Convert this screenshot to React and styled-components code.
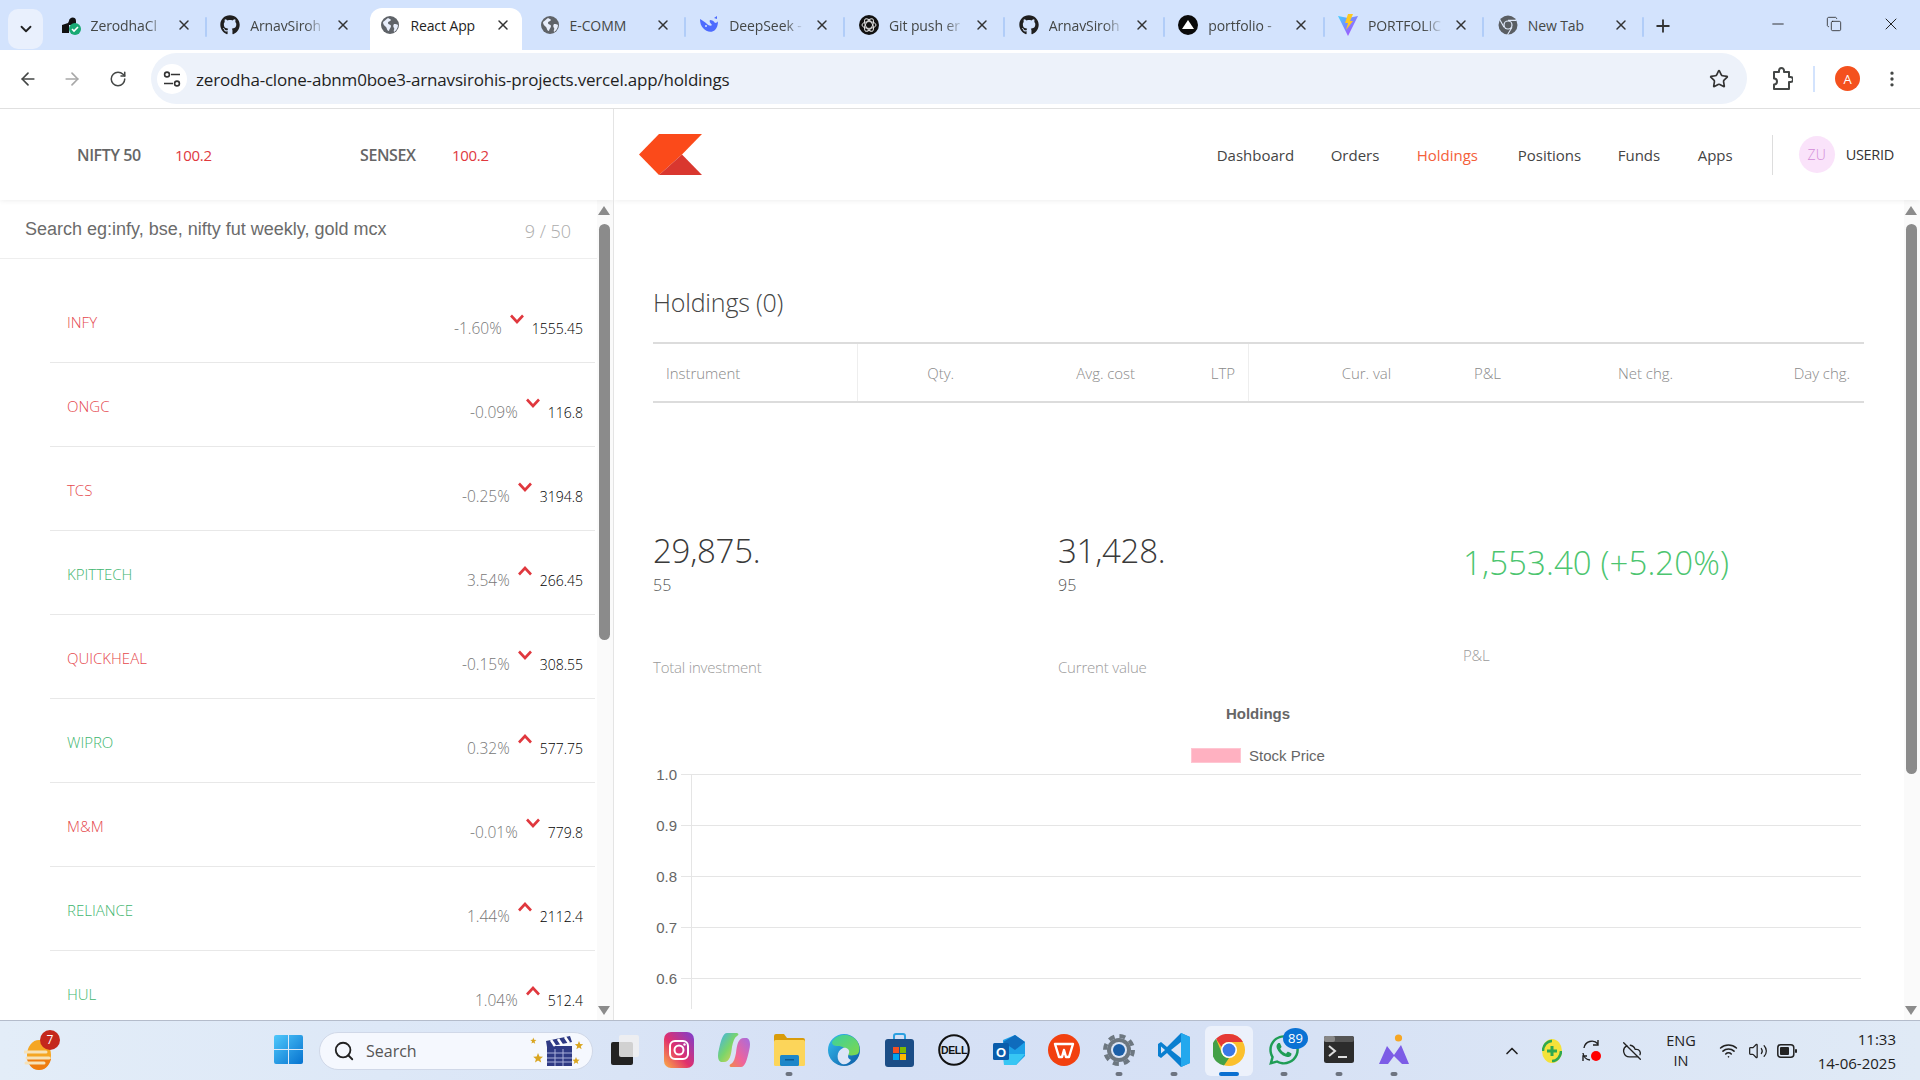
import React from "react";
import styled, { createGlobalStyle } from "styled-components";
import { ArrowLeft, ArrowRight, RotateCw, Star, EllipsisVertical, ChevronDown, X, Plus, Minus, Copy, Search, ChevronUp, Volume2, Wifi, CloudOff } from "lucide-react";
import { FaGithub, FaWhatsapp } from "react-icons/fa";

const UI = `"Open Sans", "Noto Sans", sans-serif`;

const Global = createGlobalStyle`
  html, body { margin: 0; padding: 0; height: 100%; background: #fff; overflow: hidden; }
  * { box-sizing: border-box; }
  body { font-family: ${UI}; }
`;

const Screen = styled.div`
  width: 1920px; height: 1080px; display: flex; flex-direction: column; overflow: hidden; background: #fff;
`;

/* ---------- browser tabs ---------- */
const TabStrip = styled.div`
  height: 50px; flex: none; background: #d3e3fd; display: flex; align-items: flex-end; padding-left: 8px; position: relative;
`;
const TabMenu = styled.button`
  width: 35px; height: 40px; margin: 0 4px 0 0; align-self: flex-start; margin-top: 9px; border: 0; border-radius: 10px;
  background: #e9f0fd; color: #222; display: flex; align-items: center; justify-content: center; padding: 0;
`;
const Tab = styled.div`
  width: ${p => (p.$active ? "151.7px" : "159.7px")}; margin: ${p => (p.$active ? "0 4px" : "0")};
  height: 42px; display: flex; align-items: center; position: relative; flex: none;
  padding: 0 0 8px ${p => (p.$active ? "10px" : "13.5px")};
  background: ${p => (p.$active ? "#fff" : "transparent")};
  border-radius: ${p => (p.$active ? "12px 12px 0 0" : "0")};
  &::after {
    content: ""; position: absolute; right: 0; top: 9px; height: 20px; width: 2px; border-radius: 1px;
    background: ${p => (p.$noDivider ? "transparent" : "#b1cdf8")};
  }
`;
const TabIcon = styled.span`
  width: 20px; height: 20px; flex: none; display: flex; align-items: center; justify-content: center; color: #1f1f1f;
`;
const TabTitle = styled.span`
  width: 77px; margin-left: 10px; font-size: 14px; white-space: nowrap; letter-spacing: -0.1px;
  -webkit-mask-image: ${p => (p.$fade ? "linear-gradient(90deg, #000 72%, transparent 98%)" : "none")};
  color: ${p => (p.$active ? "#1f1f1f" : "#444746")};
`;
const TabClose = styled.span`
  display: flex; color: #333; margin-left: 8px;
`;
const NewTab = styled.span`
  display: flex; color: #333; margin: 0 0 14px 9px;
`;
const WindowControls = styled.div`
  margin-left: auto; display: flex; align-items: center; padding-right: 19px; gap: 39px; color: #222; padding-bottom: 2px;
  align-self: stretch;
`;

/* ---------- address bar ---------- */
const Toolbar = styled.div`
  height: 59px; flex: none; background: #fff; display: flex; align-items: center; border-bottom: 1px solid #e0e0e0; border-radius: 12px 12px 0 0;
  padding: 0 14px 1px 17px; color: #444746;
`;
const NavIcon = styled.span`
  width: 22px; display: flex; justify-content: center; margin-right: ${p => p.$gap || 0}px; color: ${p => (p.$dim ? "#a8a8a8" : "#444746")};
`;
const Omnibox = styled.div`
  width: 1596px; height: 51px; flex: none; border-radius: 26px; background: #edf2fa; display: flex; align-items: center; padding: 0 18px 0 6px; margin-right: 24px;
`;
const SiteChip = styled.span`
  width: 30px; height: 30px; border-radius: 50%; background: #fff; display: flex; align-items: center; justify-content: center; color: #333; flex: none;
`;
const Url = styled.span`
  font-size: 17px; margin-left: 9px; padding-top: 2px; color: #1f1f1f; letter-spacing: -0.19px; flex: 1; white-space: nowrap;
`;
const Divider = styled.span`
  width: 2px; height: 26px; background: #d3e3fd; margin: 0 20px;
`;
const Profile = styled.span`
  width: 25px; height: 25px; border-radius: 50%; background: #f4511e; color: #fff; font-size: 13px; display: flex; align-items: center; justify-content: center; margin-right: 21px;
`;

/* ---------- page ---------- */
const Page = styled.div`
  flex: 1; min-height: 0; display: grid; grid-template-columns: 614px 1fr; overflow: hidden;
`;
const Column = styled.div`
  display: flex; flex-direction: column; min-height: 0; overflow: hidden; border-right: ${p => (p.$left ? "1px solid #e4e4e4" : "0")};
`;
const IndexBar = styled.div`
  height: 91px; flex: none; display: flex; align-items: center; padding: 0 0 0 77px; position: relative; z-index: 2; box-shadow: 0 0 6px rgba(0,0,0,.09); background: #fff;
`;
const IndexName = styled.span`
  font-size: 16px; font-weight: 600; color: #666; width: ${p => p.$w}px; letter-spacing: -0.4px;
`;
const IndexValue = styled.span`
  font-size: 15px; color: #e0393e; width: ${p => p.$w}px; letter-spacing: -0.3px; font-weight: 500;
`;
const PanelBody = styled.div`
  flex: 1; min-height: 0; display: flex; overflow: hidden;
`;
const Watch = styled.div`
  flex: 1; min-width: 0; display: flex; flex-direction: column; overflow: hidden;
`;
const SearchRow = styled.div`
  height: 59px; flex: none; display: flex; align-items: center; justify-content: space-between; border-bottom: 1px solid #eee; padding: 0 26px 0 25px; margin-bottom: 20px;
`;
const SearchText = styled.span`
  font: 18px "Liberation Sans", Arial, sans-serif; color: #6b6b6b;
`;
const Count = styled.span`
  font-size: 18px; color: #ababab; margin-top: 3px; font-weight: 300;
`;
const Row = styled.div`
  height: 84px; flex: none; margin-left: 50px; margin-right: 2px; padding: 3px 12px 0 17px; display: flex; align-items: center; justify-content: space-between; border-bottom: 1px solid #e8e8e8;
`;
const Name = styled.span`
  font-size: 15px; font-weight: 300; color: ${p => (p.$down ? "#e5484d" : "#3fb66f")};
`;
const Quote = styled.span`
  display: flex; align-items: center;
`;
const Pct = styled.span`
  font-size: 15.5px; font-weight: 300; color: #777; margin-top: 12px;
`;
const Arrow = styled.span`
  display: flex; color: #e0383e; margin: 0 7px; transform: translateY(-3px);
`;
const Price = styled.span`
  font-size: 14px; color: #000; font-weight: 300; margin-top: 12px;
`;
const Scrollbar = styled.div`
  width: 16px; flex: none; background: #fafafa; display: flex; flex-direction: column; align-items: center; padding: 6px 2px 5px 0;
`;
const ScrollThumb = styled.div`
  width: 11px; height: ${p => p.$h}px; background: #8b8b8b; border-radius: 6px; margin-top: 9px;
`;
const ScrollSpacer = styled.div` flex: 1; `;
const Caret = styled.div`
  width: 0; height: 0; border-left: 6px solid transparent; border-right: 6px solid transparent;
  ${p => (p.$down ? "border-top: 9px solid #8b8b8b;" : "border-bottom: 9px solid #8b8b8b;")}
`;

const TopMenu = styled.div`
  height: 91px; flex: none; display: flex; align-items: center; padding: 0 0 0 25px; position: relative; z-index: 2; box-shadow: 0 0 6px rgba(0,0,0,.09); background: #fff;
`;
const Menu = styled.nav`
  margin-left: auto; display: flex; align-items: center;
`;
const MenuLink = styled.span`
  font-size: 15px; color: ${p => (p.$active ? "#f4603a" : "#444")}; width: ${p => p.$w}px;
`;
const MenuDivider = styled.span`
  width: 1px; height: 40px; background: #ddd; margin: 0 26px 0 0;
`;
const Avatar = styled.span`
  width: 36px; height: 37px; border-radius: 50%; background: #fae3fa; color: #d28bd8; font-size: 14px; font-weight: 300; display: flex; align-items: center; justify-content: center; flex: none;
`;
const UserId = styled.span`
  font-size: 14.5px; color: #333; margin: 0 26px 0 11px; letter-spacing: -0.3px;
`;
const MainBody = styled.div`
  flex: 1; min-height: 0; display: flex; overflow: hidden;
`;
const Content = styled.div`
  flex: 1; min-width: 0; padding: 84px 40px 0 39px; overflow: hidden;
`;
const Title = styled.h3`
  margin: 0; font-size: 25px; line-height: 36px; font-weight: 300; color: #444; letter-spacing: -0.2px;
`;
const Table = styled.div`
  margin-top: 22px; height: 61px; display: grid; grid-template-columns: 205px 109px 181px 101px 155px 110px 172px 177px; border-top: 2px solid #dcdcdc; border-bottom: 2px solid #dcdcdc;
`;
const Th = styled.div`
  font-size: 15px; font-weight: 300; color: #8a8a8a; display: flex; align-items: center; padding: 1px 13px 0; letter-spacing: -0.05px;
  justify-content: ${p => (p.$left ? "flex-start" : "flex-end")};
  border-right: ${p => (p.$sep ? "1px solid #eee" : "0")};
`;
const Summary = styled.div`
  margin-top: 127px; display: grid; grid-template-columns: repeat(3, 405px);
`;
const Stat = styled.div`
  padding-top: ${p => p.$pt || 0}px;
`;
const Big = styled.div`
  font-size: 33px; line-height: 42px; font-weight: 300; color: ${p => (p.$green ? "#4cc56f" : "#3a3a3a")}; letter-spacing: ${p => (p.$green ? "0.1px" : "-0.25px")}; white-space: nowrap;
`;
const Cents = styled.div`
  font-size: 16px; line-height: 20px; font-weight: 300; color: #555; margin-top: 3px;
`;
const Label = styled.div`
  font-size: 15px; line-height: 20px; font-weight: 300; color: #9a9a9a; margin-top: ${p => p.$mt}px; letter-spacing: -0.2px;
`;
const ChartBox = styled.div`
  margin-top: 29px; width: 1210px;
`;
const ChartTitle = styled.div`
  font: bold 15px/16px "Liberation Sans", Arial, sans-serif; color: #666; text-align: center;
`;
const Legend = styled.div`
  margin-top: 23px; height: 20px; display: flex; align-items: center; justify-content: center; gap: 8px; font: 15px "Liberation Sans", Arial, sans-serif; color: #666;
`;
const LegendSwatch = styled.span`
  width: 50px; height: 15px; background: #ffb1c1; border: 1px solid #ffc6d2;
`;
const ChartSvg = styled.svg`
  display: block; margin-top: 4px; font: 15px "Liberation Sans", Arial, sans-serif;
`;

/* ---------- taskbar ---------- */
const Taskbar = styled.div`
  height: 60px; flex: none; display: flex; align-items: center; border-top: 1px solid #b4bccb; padding: 0 24px;
  background: linear-gradient(90deg, #e3edf8 0%, #dde8f7 20%, #d5e0f5 45%, #d6e1f5 65%, #e0eaf6 100%);
`;
const Widget = styled.div`
  width: 32px; height: 40px; position: relative; display: flex; align-items: flex-end; margin-right: 208px; flex: none;
`;
const WidgetBadge = styled.span`
  position: absolute; left: 16px; top: -1px; width: 20px; height: 20px; border-radius: 50%; background: #c4281c; color: #fff; font-size: 12px; display: flex; align-items: center; justify-content: center;
`;
const TaskItem = styled.div`
  width: 48px; height: 50px; flex: none; display: flex; align-items: center; justify-content: center; position: relative; border-radius: 6px; padding-bottom: 2px;
  background: ${p => (p.$active ? "rgba(255,255,255,.55)" : "transparent")};
  &::after {
    content: ""; display: ${p => (p.$dot || p.$active ? "block" : "none")};
    position: absolute; bottom: 0; left: 50%; transform: translateX(-50%); height: 4px; border-radius: 2px;
    width: ${p => (p.$active ? "20px" : "7px")}; background: ${p => (p.$active ? "#0a6fd0" : "#6d7480")};
  }
`;
const TaskSearch = styled.div`
  width: 274px; height: 38px; flex: none; border-radius: 19px; background: #f5f8fe; border: 1px solid #d0d8e8; display: flex; align-items: center; padding: 0 8px 0 13px; gap: 11px; color: #222;
`;
const TaskSearchText = styled.span`
  font-size: 16px; color: #555; flex: 1;
`;
const TaskGroup = styled.div`
  display: flex; align-items: center; gap: 7px;
`;
const CountBadge = styled.span`
  position: absolute; right: 0; top: 2px; width: 25px; height: 21px; border-radius: 50%; background: #0a72d4; color: #fff; font-size: 13px; display: flex; align-items: center; justify-content: center;
`;
const Tray = styled.div`
  margin-left: auto; display: flex; align-items: center; color: #222;
`;
const TraySlot = styled.span`
  width: ${p => p.$w}px; display: flex; justify-content: center; align-items: center;
`;
const Lang = styled.span`
  font-size: 14.5px; line-height: 20px; color: #222; text-align: center; width: 48px; margin: 0 9px 0 5px;
`;
const Clock = styled.span`
  font-size: 15px; line-height: 24px; color: #222; text-align: right; width: 90px; margin-left: 5px;
`;

/* ---------- drawings ---------- */
const Globe = () => (
  <svg width="20" height="20" viewBox="0 0 20 20"><circle cx="10" cy="10" r="9" fill="#5f6368"/><path d="M3 7c2-1 3-3 5-4 1 1 3 1 3 2-1 2-3 1-3 3s3 1 3 3-2 3-2 5c-2 0-2-3-3-4S3 10 3 7zM14 9c2 0 3 0 4 1 0 3-2 6-4 7-1-2 1-3 0-4s-1-3 0-4z" fill="#e8eefb"/></svg>
);
const ZerodhaFav = () => (
  <svg width="20" height="20" viewBox="0 0 20 20"><path d="M1 10l6-2 1-2c0-4 7-5 7 0v4H8v8H1z" fill="#111"/><circle cx="14" cy="14" r="6" fill="#19a974"/><path d="M11 14l2 2 4-4" stroke="#fff" strokeWidth="1.6" fill="none"/></svg>
);
const WhaleFav = () => (
  <svg width="20" height="20" viewBox="0 0 20 20"><path d="M1 4c0 4 1 7 3 9 3 4 9 5 12 2 2-2 3-5 3-9 0 1-2 2-3 2-1-2-3-3-5-3-1 1 0 3 2 5-1 1-3 1-5-1S3 5 1 4z" fill="#4d6bfe"/><path d="M15 3l3-2v3z" fill="#4d6bfe"/><circle cx="7" cy="11" r="1" fill="#d3e3fd"/></svg>
);
const OpenAiFav = () => (
  <svg width="20" height="20" viewBox="0 0 20 20"><circle cx="10" cy="10" r="10" fill="#111"/>{[0, 60, 120].map(a => <ellipse key={a} cx="10" cy="10" rx="7" ry="3.4" fill="none" stroke="#ddd" strokeWidth="1" transform={`rotate(${a} 10 10)`}/>)}</svg>
);
const VercelFav = () => (
  <svg width="20" height="20" viewBox="0 0 20 20"><circle cx="10" cy="10" r="10" fill="#0a0a0a"/><path d="M10 5l6 9H4z" fill="#fff"/></svg>
);
const ViteFav = () => (
  <svg width="20" height="22" viewBox="0 0 20 22"><defs><linearGradient id="vg" x1="0" y1="0" x2="1" y2="1"><stop offset="0" stopColor="#41d1ff"/><stop offset="1" stopColor="#bd34fe"/></linearGradient></defs><path d="M0 2l10 2 10-2-10 20z" fill="url(#vg)"/><path d="M10 0l5 0-3 7h3l-7 9 2-7H7z" fill="#ffc81f"/></svg>
);
const ChromeMono = () => (
  <svg width="20" height="20" viewBox="0 0 20 20"><circle cx="10" cy="10" r="9.5" fill="#5a5e63"/><circle cx="10" cy="10" r="4.6" fill="#e2ebfb"/><circle cx="10" cy="10" r="3.4" fill="#5a5e63"/><path d="M10 5.4h8.4M6 12.3L2 5M14 12.3l-4.5 7.4" stroke="#e2ebfb" strokeWidth="1.1"/></svg>
);
const Tune = () => (
  <svg width="18" height="18" viewBox="0 0 18 18" fill="none" stroke="#333" strokeWidth="1.6"><circle cx="4" cy="4.500" r="2.400"/><path d="M8 4.500h9M1 13.500h9"/><circle cx="14" cy="13.500" r="2.400"/></svg>
);
const ExtensionIcon = () => (
  <svg width="22" height="24" viewBox="0 0 22 24" fill="none" stroke="#444746" strokeWidth="2" strokeLinejoin="round"><path d="M3 5h5V3.500a2.500 2.500 0 015 0V5h5v5h1.500a2.500 2.500 0 010 5H18v7H3v-4.500c2 0 3-1 3-3s-1-3-3-3z"/></svg>
);
const KiteLogo = () => (
  <svg width="63" height="41" viewBox="0 0 63 41"><path d="M0 20.5L20 0h43L43 20.5 20 41z" fill="#fb4a1a"/><path d="M43 20.5L63 41H20z" fill="#d9372f"/></svg>
);
const Chev = ({ up }) => (
  <svg width="16" height="10" viewBox="0 0 16 10"><path d={up ? "M2 8.5L8 2l6 6.5" : "M2 1.5L8 8l6-6.5"} fill="none" stroke="currentColor" strokeWidth="2.6"/></svg>
);
const Flame = () => (
  <svg width="32" height="36" viewBox="0 0 32 36"><ellipse cx="15" cy="20" rx="12" ry="15" fill="#f5a623"/><path d="M3 24h24c-2 8-7 11-12 11S5 32 3 24z" fill="#ef7d10"/><path d="M0 17h22M3 23h22M2 28h18" stroke="#f6e2b8" strokeWidth="3" strokeLinecap="round"/></svg>
);
const WinLogo = () => (
  <svg width="29" height="29" viewBox="0 0 29 29"><defs><linearGradient id="wl" x1="0" y1="0" x2="1" y2="1"><stop offset="0" stopColor="#4fc8fb"/><stop offset="1" stopColor="#0672cf"/></linearGradient></defs><path d="M0 2a2 2 0 012-2h12v14H0zM15 0h12a2 2 0 012 2v12H15zM0 15h14v14H2a2 2 0 01-2-2zM15 15h14v12a2 2 0 01-2 2H15z" fill="url(#wl)"/></svg>
);
const Clapper = () => (
  <svg width="54" height="32" viewBox="0 0 54 32"><g fill="#d9a520"><path d="M3 6l1.200 3 3 .2-2.400 2 .8 3-2.600-1.700L.6 14l.8-3L-1 9.200l3-.2z" transform="translate(1 -2) scale(.75)"/><path d="M8 18l1.500 3.500 3.500.2-2.700 2.300.9 3.500-3.200-2-3 2 .9-3.500-2.700-2.300 3.500-.2z"/><path d="M50 8l1.200 3 3 .2-2.400 2 .8 3-2.600-1.700-2.600 1.700.8-3-2.400-2 3-.2z" transform="translate(-1 -2)"/><path d="M46 22l1 2.500 2.600.2-2 1.700.7 2.600-2.300-1.400-2.200 1.400.6-2.600-2-1.700 2.600-.2z"/></g><path d="M17 11h25v20H17z" fill="#2f3a84"/><path d="M17 18h25M17 23h25M17 27h25M25 14v17M33 14v17" stroke="#aab0da" strokeWidth="1"/><path d="M16 6l24-5 2 6-25 5z" fill="#2f3a84"/><path d="M21 5l4 6M28 4l4 6M35 2l4 6" stroke="#fff" strokeWidth="2.600"/></svg>
);
const FilesIcon = () => (
  <svg width="30" height="30" viewBox="0 0 30 30"><rect x="2" y="7" width="22" height="23" rx="2" fill="#222"/><rect x="10" y="0" width="20" height="22" rx="2" fill="#f0f0f0" opacity=".85"/></svg>
);
const InstaIcon = () => (
  <svg width="30" height="36" viewBox="0 0 30 36"><defs><linearGradient id="ig" x1="0" y1="1" x2="1" y2="0"><stop offset="0" stopColor="#fcb045"/><stop offset=".45" stopColor="#e1306c"/><stop offset="1" stopColor="#7b3fd1"/></linearGradient></defs><rect width="30" height="36" rx="7" fill="url(#ig)"/><rect x="6" y="9" width="18" height="18" rx="5" fill="none" stroke="#fff" strokeWidth="2"/><circle cx="15" cy="18" r="4.500" fill="none" stroke="#fff" strokeWidth="2"/><circle cx="20.500" cy="12.500" r="1.200" fill="#fff"/></svg>
);
const CopilotIcon = () => (
  <svg width="32" height="36" viewBox="0 0 32 36"><defs><linearGradient id="c1" x1="0" y1="0" x2="1" y2="1"><stop offset="0" stopColor="#3fb0f0"/><stop offset=".5" stopColor="#7ad56b"/><stop offset="1" stopColor="#f6d04d"/></linearGradient><linearGradient id="c2" x1="1" y1="0" x2="0" y2="1"><stop offset="0" stopColor="#a56ce0"/><stop offset=".6" stopColor="#f0649a"/><stop offset="1" stopColor="#f08a4b"/></linearGradient></defs><path d="M9 1h9c3 0 3 2 1 3-3 2-4 6-5 11-1 8-2 15-8 15H4C0 30-1 24 1 17 3 8 5 1 9 1z" fill="url(#c1)"/><path d="M23 35h-9c-3 0-3-2-1-3 3-2 4-6 5-11 1-8 2-15 8-15h2c4 0 5 6 3 13-2 9-4 16-8 16z" fill="url(#c2)"/></svg>
);
const FolderIcon = () => (
  <svg width="31" height="33" viewBox="0 0 31 33"><path d="M0 3a2 2 0 012-2h8l3 4h16a2 2 0 012 2v3H0z" fill="#d99c0a"/><rect y="7" width="31" height="26" rx="1.500" fill="#fcd55a"/><rect x="6" y="22" width="19" height="11" rx="1.500" fill="#1d87c9"/><rect x="11" y="26" width="9" height="1.500" fill="#0b5b94"/></svg>
);
const EdgeIcon = () => (
  <svg width="32" height="32" viewBox="0 0 32 32"><defs><linearGradient id="e1" x1="0" y1="0" x2="1" y2="1"><stop offset="0" stopColor="#35c1f1"/><stop offset="1" stopColor="#0c59a4"/></linearGradient><linearGradient id="e2" x1="0" y1="0" x2="1" y2="1"><stop offset="0" stopColor="#3bd0a0"/><stop offset="1" stopColor="#7fd84a"/></linearGradient></defs><circle cx="16" cy="16" r="16" fill="url(#e1)"/><path d="M4 8C8 0 22-2 29 7c4 6 3 14-2 14-5 1-9 0-9-3 0-4-4-6-8-6S4 11 4 8z" fill="url(#e2)"/><path d="M14 30c-6-3-6-13 1-16 4-1 7 2 6 5-1 3-2 5 2 7-2 3-5 5-9 4z" fill="#dce5f7"/></svg>
);
const StoreIcon = () => (
  <svg width="29" height="34" viewBox="0 0 29 34"><path d="M9 7V3a2 2 0 012-2h7a2 2 0 012 2v4" fill="none" stroke="#2ca0e0" strokeWidth="2"/><rect y="6" width="29" height="28" rx="3" fill="#1b4d86"/><rect x="8" y="14" width="6" height="6" fill="#f25022"/><rect x="15" y="14" width="6" height="6" fill="#7fba00"/><rect x="8" y="21" width="6" height="6" fill="#00a4ef"/><rect x="15" y="21" width="6" height="6" fill="#ffb900"/></svg>
);
const DellIcon = () => (
  <svg width="32" height="32" viewBox="0 0 32 32"><circle cx="16" cy="16" r="14.800" fill="none" stroke="#111" strokeWidth="2"/><text x="16" y="20" textAnchor="middle" fontFamily="Liberation Sans, Arial, sans-serif" fontWeight="700" fontSize="10.500" letterSpacing="-.4" fill="#111">DELL</text></svg>
);
const OutlookIcon = () => (
  <svg width="32" height="32" viewBox="0 0 32 32"><path d="M10 6L22 1l10 7v14l-9 9H11z" fill="#1da1e8"/><path d="M22 1l10 7-10 8-12-8z" fill="#0f6cbd"/><path d="M10 20h22l-9 11H11z" fill="#37c6f4"/><rect y="9" width="16" height="17" rx="1.500" fill="#0a5cab"/><text x="8" y="22.500" textAnchor="middle" fontFamily="Liberation Sans, Arial, sans-serif" fontWeight="700" fontSize="13" fill="#fff">O</text></svg>
);
const WpsIcon = () => (
  <svg width="32" height="32" viewBox="0 0 32 32"><circle cx="16" cy="16" r="16" fill="#f2400f"/><path d="M7 10h18l-4 13h-3l-2-7-2 7h-3z" fill="none" stroke="#fff" strokeWidth="2.400" strokeLinejoin="round"/></svg>
);
const GearIcon = () => (
  <svg width="32" height="32" viewBox="0 0 32 32"><circle cx="16" cy="16" r="12" fill="#6d7780"/><circle cx="16" cy="16" r="14" fill="none" stroke="#6d7780" strokeWidth="4" strokeDasharray="6 5"/><circle cx="16" cy="16" r="8" fill="#dbe5f6"/><circle cx="16" cy="16" r="6" fill="#1b5fa8"/></svg>
);
const VsIcon = () => (
  <svg width="32" height="34" viewBox="0 0 32 34"><path d="M23 0l9 4v26l-9 4L9 20l-6 5-3-2V11l3-2 6 5z" fill="#0a7fd0"/><path d="M23 0l9 4v26l-9 4z" fill="#23a8ee"/><path d="M23 9L13 17l10 8z" fill="#dbe5f6"/><path d="M3 13.500v7l4-3.500z" fill="#dbe5f6"/></svg>
);
const ChromeIcon = () => (
  <svg width="32" height="32" viewBox="0 0 32 32"><circle cx="16" cy="16" r="16" fill="#fbc02d"/><path d="M16 0a16 16 0 0113.900 8H16a8 8 0 00-7.500 5L3 4.800A16 16 0 0116 0z" fill="#e53935"/><path d="M3 4.800L9.200 20A8 8 0 0016 24l-5 7.400A16 16 0 013 4.800z" fill="#43a047"/><circle cx="16" cy="16" r="8" fill="#fff"/><circle cx="16" cy="16" r="6.400" fill="#3b78e7"/></svg>
);
const TerminalIcon = () => (
  <svg width="30" height="27" viewBox="0 0 30 27"><rect width="30" height="27" rx="2.500" fill="#2c2c2c"/><rect width="30" height="6" rx="2" fill="#555"/><rect width="11" height="6" rx="2" fill="#888"/><path d="M5 10l6 5-6 5" fill="none" stroke="#ddd" strokeWidth="2"/><path d="M14 21h9" stroke="#ddd" strokeWidth="2"/></svg>
);
const MountainIcon = () => (
  <svg width="30" height="32" viewBox="0 0 30 32"><circle cx="19.500" cy="4" r="3.600" fill="#f6a623"/><path d="M0 30L8 12l7 9 7-10 8 19h-7l-8-8-6 8z" fill="#7c5ce6"/></svg>
);
const Shield = () => (
  <svg width="20" height="24" viewBox="0 0 20 24"><ellipse cx="10" cy="12" rx="10" ry="12" fill="#f4e23a"/><path d="M1 12a9 10 0 019-10M19 12a9 10 0 01-9 10" fill="none" stroke="#2fa84f" strokeWidth="2.500"/><path d="M10 7v10M5 12h10" stroke="#2fa84f" strokeWidth="3"/></svg>
);
const SyncDot = () => (
  <svg width="22" height="25" viewBox="0 0 22 25"><path d="M3 10a8 8 0 0114-4M17 2v5h-5M2 15a8 8 0 007 7M2 23v-5h4" fill="none" stroke="#222" strokeWidth="1.400"/><circle cx="15" cy="18" r="5" fill="#f00"/></svg>
);
const Battery = () => (
  <svg width="20" height="14" viewBox="0 0 20 14"><rect x=".8" y=".8" width="16" height="12.400" rx="3" fill="none" stroke="#222" strokeWidth="1.500"/><rect x="3" y="3" width="9" height="8" rx="1" fill="#222"/><rect x="18" y="5" width="2" height="4" rx="1" fill="#222"/></svg>
);

const tabs = [
  { t: "ZerodhaCl", i: <ZerodhaFav />, fade: true },
  { t: "ArnavSiroh", i: <FaGithub size={20} />, nd: true, fade: true },
  { t: "React App", i: <Globe />, active: true, nd: true },
  { t: "E-COMM", i: <Globe /> },
  { t: "DeepSeek -", i: <WhaleFav />, fade: true },
  { t: "Git push er", i: <OpenAiFav />, fade: true },
  { t: "ArnavSiroh", i: <FaGithub size={20} />, fade: true },
  { t: "portfolio -", i: <VercelFav />, fade: true },
  { t: "PORTFOLIC", i: <ViteFav />, fade: true },
  { t: "New Tab", i: <ChromeMono /> },
];

const rows = [
  ["INFY", "-1.60%", "1555.45", true],
  ["ONGC", "-0.09%", "116.8", true],
  ["TCS", "-0.25%", "3194.8", true],
  ["KPITTECH", "3.54%", "266.45", false],
  ["QUICKHEAL", "-0.15%", "308.55", true],
  ["WIPRO", "0.32%", "577.75", false],
  ["M&M", "-0.01%", "779.8", true],
  ["RELIANCE", "1.44%", "2112.4", false],
  ["HUL", "1.04%", "512.4", false],
];

const cols = [
  ["Instrument", true, true], ["Qty."], ["Avg. cost"], ["LTP", false, true],
  ["Cur. val"], ["P&L"], ["Net chg."], ["Day chg."],
];

const ticks = ["1.0", "0.9", "0.8", "0.7", "0.6"];

const ScrollRail = ({ h }) => (
  <Scrollbar>
    <Caret />
    <ScrollThumb $h={h} />
    <ScrollSpacer />
    <Caret $down />
  </Scrollbar>
);

export default function App() {
  return (
    <Screen>
      <Global />
      <TabStrip>
        <TabMenu><ChevronDown size={18} strokeWidth={2.4} /></TabMenu>
        {tabs.map((tab, i) => (
          <Tab key={i} $active={tab.active} $noDivider={tab.nd}>
            <TabIcon>{tab.i}</TabIcon>
            <TabTitle $active={tab.active} $fade={tab.fade}>{tab.t}</TabTitle>
            <TabClose><X size={16} strokeWidth={2.2} /></TabClose>
          </Tab>
        ))}
        <NewTab><Plus size={20} strokeWidth={2.2} /></NewTab>
        <WindowControls>
          <Minus size={18} strokeWidth={1.2} />
          <Copy size={16} strokeWidth={1.2} />
          <X size={20} strokeWidth={1.2} />
        </WindowControls>
      </TabStrip>
      <Toolbar>
        <NavIcon $gap={22}><ArrowLeft size={20} /></NavIcon>
        <NavIcon $dim $gap={24}><ArrowRight size={20} /></NavIcon>
        <NavIcon $gap={22}><RotateCw size={18} /></NavIcon>
        <Omnibox>
          <SiteChip><Tune /></SiteChip>
          <Url>zerodha-clone-abnm0boe3-arnavsirohis-projects.vercel.app/holdings</Url>
          <Star size={20} color="#333" strokeWidth={2} />
        </Omnibox>
        <NavIcon><ExtensionIcon /></NavIcon>
        <Divider />
        <Profile>A</Profile>
        <NavIcon><EllipsisVertical size={20} /></NavIcon>
      </Toolbar>
      <Page>
        <Column $left>
          <IndexBar>
            <IndexName $w={98}>NIFTY 50</IndexName>
            <IndexValue $w={185}>100.2</IndexValue>
            <IndexName $w={92}>SENSEX</IndexName>
            <IndexValue $w={60}>100.2</IndexValue>
          </IndexBar>
          <PanelBody>
            <Watch>
              <SearchRow>
                <SearchText>Search eg:infy, bse, nifty fut weekly, gold mcx</SearchText>
                <Count>9 / 50</Count>
              </SearchRow>
              {rows.map(([n, p, v, d]) => (
                <Row key={n}>
                  <Name $down={d}>{n}</Name>
                  <Quote>
                    <Pct>{p}</Pct>
                    <Arrow><Chev up={!d} /></Arrow>
                    <Price>{v}</Price>
                  </Quote>
                </Row>
              ))}
            </Watch>
            <ScrollRail h={416} />
          </PanelBody>
        </Column>
        <Column>
          <TopMenu>
            <KiteLogo />
            <Menu>
              <MenuLink $w={114}>Dashboard</MenuLink>
              <MenuLink $w={86}>Orders</MenuLink>
              <MenuLink $w={101} $active>Holdings</MenuLink>
              <MenuLink $w={100}>Positions</MenuLink>
              <MenuLink $w={80}>Funds</MenuLink>
              <MenuLink $w={74}>Apps</MenuLink>
              <MenuDivider />
              <Avatar>ZU</Avatar>
              <UserId>USERID</UserId>
            </Menu>
          </TopMenu>
          <MainBody>
            <Content>
              <Title>Holdings (0)</Title>
              <Table>
                {cols.map(([c, l, s]) => <Th key={c} $left={l} $sep={s}>{c}</Th>)}
              </Table>
              <Summary>
                <Stat>
                  <Big>29,875.</Big>
                  <Cents>55</Cents>
                  <Label $mt={62}>Total investment</Label>
                </Stat>
                <Stat>
                  <Big>31,428.</Big>
                  <Cents>95</Cents>
                  <Label $mt={62}>Current value</Label>
                </Stat>
                <Stat $pt={12}>
                  <Big $green>1,553.40 (+5.20%)</Big>
                  <Label $mt={61}>P&amp;L</Label>
                </Stat>
              </Summary>
              <ChartBox>
                <ChartTitle>Holdings</ChartTitle>
                <Legend><LegendSwatch />Stock Price</Legend>
                <ChartSvg width="1210" height="240" viewBox="0 0 1210 240">
                  <line x1="38.500" x2="38.500" y1="5" y2="240" stroke="#e5e5e5" />
                  {ticks.map((t, i) => {
                    const y = 5.5 + i * 51;
                    return (
                      <g key={t}>
                        <line x1="28" x2="1208" y1={y} y2={y} stroke="#e5e5e5" />
                        <text x="24" y={y + 5} textAnchor="end" fill="#666">{t}</text>
                      </g>
                    );
                  })}
                </ChartSvg>
              </ChartBox>
            </Content>
            <ScrollRail h={550} />
          </MainBody>
        </Column>
      </Page>
      <Taskbar>
        <Widget>
          <Flame />
          <WidgetBadge>7</WidgetBadge>
        </Widget>
        <TaskGroup>
          <TaskItem><WinLogo /></TaskItem>
          <TaskSearch>
            <Search size={22} strokeWidth={2} />
            <TaskSearchText>Search</TaskSearchText>
            <Clapper />
          </TaskSearch>
          <TaskItem><FilesIcon /></TaskItem>
          <TaskItem><InstaIcon /></TaskItem>
          <TaskItem><CopilotIcon /></TaskItem>
          <TaskItem $dot><FolderIcon /></TaskItem>
          <TaskItem><EdgeIcon /></TaskItem>
          <TaskItem><StoreIcon /></TaskItem>
          <TaskItem><DellIcon /></TaskItem>
          <TaskItem><OutlookIcon /></TaskItem>
          <TaskItem><WpsIcon /></TaskItem>
          <TaskItem $dot><GearIcon /></TaskItem>
          <TaskItem $dot><VsIcon /></TaskItem>
          <TaskItem $active><ChromeIcon /></TaskItem>
          <TaskItem $dot>
            <FaWhatsapp size={34} color="#1f9d55" />
            <CountBadge>89</CountBadge>
          </TaskItem>
          <TaskItem $dot><TerminalIcon /></TaskItem>
          <TaskItem $dot><MountainIcon /></TaskItem>
        </TaskGroup>
        <Tray>
          <TraySlot $w={40}><ChevronUp size={20} strokeWidth={2} /></TraySlot>
          <TraySlot $w={40}><Shield /></TraySlot>
          <TraySlot $w={40}><SyncDot /></TraySlot>
          <TraySlot $w={40}><CloudOff size={20} strokeWidth={1.6} /></TraySlot>
          <Lang>ENG<br />IN</Lang>
          <TraySlot $w={29}><Wifi size={19} strokeWidth={2} /></TraySlot>
          <TraySlot $w={29}><Volume2 size={20} strokeWidth={1.5} /></TraySlot>
          <TraySlot $w={29}><Battery /></TraySlot>
          <Clock>11:33<br />14-06-2025</Clock>
        </Tray>
      </Taskbar>
    </Screen>
  );
}
